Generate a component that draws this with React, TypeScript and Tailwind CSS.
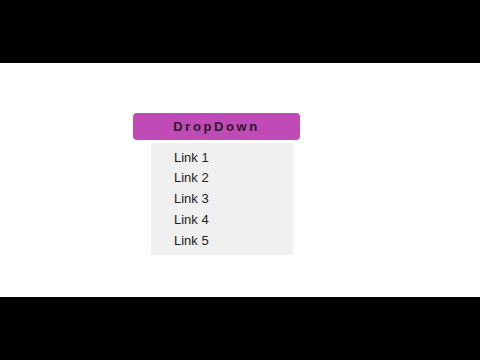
export default function App() {
  const links = ["Link 1", "Link 2", "Link 3", "Link 4", "Link 5"];

  return (
    <div className="flex h-[360px] w-[480px] flex-col bg-black font-['Liberation_Sans',Arial,sans-serif]">
      <div className="h-[63px] shrink-0 bg-black" />
      <div className="h-[234px] shrink-0 bg-white pl-[133px] pt-[50px]">
        <div className="w-[167px]">
          <button className="flex h-[27px] w-full items-center justify-center rounded-[4px] bg-[#c14bb6] text-[13px] font-bold tracking-[2.6px] text-[#2a1627]">
            DropDown
          </button>
          <div className="mt-[3px] ml-[18px] w-[142px] bg-[#f0f0f0] py-[4px]">
            {links.map((l) => (
              <div key={l} className="flex h-[20.8px] items-center pl-[23px] text-[13px] text-[#222]">
                {l}
              </div>
            ))}
          </div>
        </div>
      </div>
      <div className="flex-1 bg-black" />
    </div>
  );
}
